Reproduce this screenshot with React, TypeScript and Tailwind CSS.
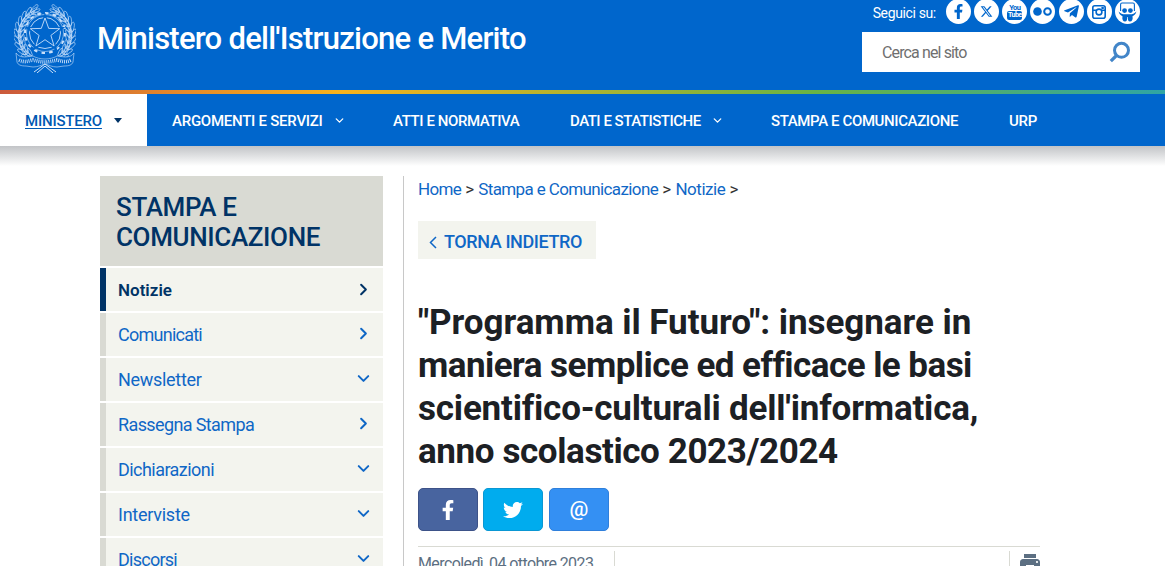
import type { ReactNode } from 'react';
import { FaFacebookF, FaTwitter, FaTelegramPlane } from 'react-icons/fa';
import { FaXTwitter } from 'react-icons/fa6';
import { MdPrint } from 'react-icons/md';
import { ChevronDown, ChevronRight } from 'lucide-react';

const navItems = [
  { label: 'ARGOMENTI E SERVIZI', className: 'w-[221px]', text: 'tracking-[-0.25px]', hasMenu: true },
  { label: 'ATTI E NORMATIVA', className: 'w-[177px]', text: 'tracking-[-0.4px]', hasMenu: false },
  { label: 'DATI E STATISTICHE', className: 'w-[201px]', text: 'tracking-[-0.48px]', hasMenu: true },
  { label: 'STAMPA E COMUNICAZIONE', className: 'w-[238px]', text: 'tracking-[-0.38px]', hasMenu: false },
  { label: 'URP', className: 'w-[79px]', text: 'tracking-[-0.3px]', hasMenu: false },
];

const sideItems = [
  { label: 'Comunicati', text: 'tracking-[-0.75px]', open: false },
  { label: 'Newsletter', text: 'tracking-[-0.3px]', open: true },
  { label: 'Rassegna Stampa', text: 'tracking-[-0.62px]', open: false },
  { label: 'Dichiarazioni', text: 'tracking-[-0.55px]', open: true },
  { label: 'Interviste', text: 'tracking-[-0.25px]', open: true },
  { label: 'Discorsi', text: 'tracking-[-0.75px]', open: true },
];

const leafAngles = [24, 37, 50, 63, 76, 89, 102, 115, 128, 141];

function Branch() {
  return (
    <g>
      <path d="M24 62C11 57 5 46 5 34 5 20 12 9 23 4" />
      {leafAngles.map((angle) => (
        <g key={angle} transform={`rotate(${-angle} 31 32)`}>
          <ellipse cx="32" cy="3.5" rx="5" ry="1.7" transform="rotate(-24 32 3.5)" />
          <ellipse cx="32" cy="6.5" rx="5" ry="1.3" />
          <ellipse cx="32" cy="9" rx="4.5" ry="1.5" transform="rotate(24 32 9)" />
        </g>
      ))}
    </g>
  );
}

function Emblem() {
  return (
    <svg width="62" height="70" viewBox="0 0 62 70" fill="none" stroke="#c9e0fa" strokeWidth="0.6" className="shrink-0">
      <Branch />
      <g transform="translate(62 0) scale(-1 1)"><Branch /></g>
      <circle cx="31" cy="30" r="18.5" fill="#0066cc" />
      <circle cx="31" cy="30" r="20" strokeWidth="2" strokeDasharray="3.6 4.2" />
      <circle cx="31" cy="30" r="15.5" strokeWidth="0.9" />
      <path strokeWidth="3" stroke="#0066cc" d="M31 14l4 11.2 12 .3-9.5 7.3 3.4 11.5L31 37.5l-9.9 6.8 3.4-11.5-9.5-7.3 12-.3Z" />
      <path fill="#0066cc" strokeWidth="0.9" d="M31 15l3.7 10.4 11 .3-8.8 6.7 3.2 10.6L31 36.7 21.9 43l3.2-10.6-8.8-6.7 11-.3Z" />
      <path d="M2 50c2 3 5 4 9 4l8-1c3 2 8 3 12 3s9-1 12-3l8 1c4 0 7-1 9-4l-1 9c-1 3-4 4-9 4l-7 1c-5 0-8-2-12-3-4 1-7 3-12 3l-7-1c-5 0-8-1-9-4Z" fill="#0066cc" />
      <path d="M5 57c6 3 9 1 14 0 4 1 8 2 12 2s8-1 12-2c5 1 8 3 14 0" strokeWidth="3.6" strokeDasharray="0.9 1.1" />
      <path d="M20 69l11-8 11 8M23 70l8-7 8 7" strokeWidth="1" />
    </svg>
  );
}

function SocialIcon({ children }: { children: ReactNode }) {
  return (
    <span className="flex size-[25px] items-center justify-center rounded-full bg-white text-[#0066cc]">{children}</span>
  );
}

function YoutubeIcon() {
  return (
    <span className="flex flex-col items-center font-['Liberation_Sans_Narrow','Roboto',sans-serif] font-bold">
      <span className="text-[7.5px] leading-[7px] tracking-[-0.6px]">You</span>
      <span className="h-[9px] w-[15px] rounded-[2px] bg-[#0066cc] text-center text-[7px] leading-[9px] tracking-[-0.6px] text-white">Tube</span>
    </span>
  );
}

function CameraIcon() {
  return (
    <svg width="14" height="14" viewBox="0 0 14 14" fill="none" stroke="currentColor" strokeWidth="1.6">
      <rect x="0.8" y="0.8" width="12.4" height="12.4" rx="2" />
      <path d="M1 5.2h3.6M9.4 5.2H13" strokeWidth="1.4" />
      <path d="M9.4 2h2.4v2H9.4Z" fill="currentColor" stroke="none" />
      <circle cx="7" cy="7" r="2.9" />
    </svg>
  );
}

function SlideshareIcon() {
  return (
    <svg width="19" height="20" viewBox="0 0 19 20" fill="currentColor">
      <path d="M2.6 9V2.4Q2.6 1 4 1h11q1.4 0 1.4 1.4V9" fill="none" stroke="currentColor" strokeWidth="1.1" />
      <circle cx="6.6" cy="8.6" r="2.4" />
      <circle cx="12.4" cy="8.6" r="2.4" />
      <path d="M0.6 9.6C3 12.4 6 12.6 9.5 12.2c3.500.4 6.500.2 8.900-2.600-.5 2.600-2.200 3.800-3.900 4.600.6 3.200-.4 5.300-2.500 5.300-1.700 0-2.200-1.300-2.200-4.500h-.6c0 3.200-.5 4.500-2.200 4.500-2.100 0-3.100-2.100-2.500-5.300C2.800 13.400 1.100 12.200.6 9.600Z" />
    </svg>
  );
}

function SearchIcon() {
  return (
    <svg width="22" height="22" viewBox="0 0 22 22" fill="none" stroke="#4285c8">
      <circle cx="12.500" cy="9.300" r="7" strokeWidth="3" />
      <path d="M7.500 14.500L1.800 20.200" strokeWidth="3.200" />
    </svg>
  );
}

function Header() {
  return (
    <header>
      <div className="flex h-[90px] justify-between bg-[#0066cc] pl-[14px] pr-[25px]">
        <div className="flex pt-[3px]">
          <Emblem />
          <h1 className="ml-[21px] mt-[15px] whitespace-nowrap text-[31px] font-medium leading-[42px] tracking-[-0.75px] text-white">
            Ministero dell'Istruzione e Merito
          </h1>
        </div>
        <div className="w-[278px]">
          <div className="flex h-8 justify-end gap-[3px]">
            <span className="mr-[7px] whitespace-nowrap pt-[3px] text-sm tracking-[-0.37px] text-white">Seguici su:</span>
            <div className="-mt-px flex gap-[3.2px]">
              <SocialIcon><FaFacebookF size={15} /></SocialIcon>
              <SocialIcon><FaXTwitter size={13} /></SocialIcon>
              <SocialIcon><YoutubeIcon /></SocialIcon>
              <SocialIcon>
                <svg width="19" height="9" viewBox="0 0 19 9">
                  <circle cx="4.5" cy="4.5" r="4.3" fill="currentColor" />
                  <circle cx="14.5" cy="4.5" r="3.3" fill="none" stroke="currentColor" strokeWidth="2" />
                </svg>
              </SocialIcon>
              <SocialIcon><FaTelegramPlane size={17} /></SocialIcon>
              <SocialIcon><CameraIcon /></SocialIcon>
              <SocialIcon><SlideshareIcon /></SocialIcon>
            </div>
          </div>
          <div className="flex h-10 items-center justify-between bg-white pl-5 pr-[9px]">
            <span className="pt-0.5 text-base tracking-[-0.87px] text-[#6f6f6f]">Cerca nel sito</span>
            <SearchIcon />
          </div>
        </div>
      </div>
      <div className="h-1 bg-[linear-gradient(90deg,#cb5a3c_0%,#f9b21b_29%,#69b345_70%,#2fa5a5_100%)]" />
      <nav className="flex h-[52px] bg-[#0066cc] text-[15px] font-medium text-white">
        <a className="flex w-[147px] items-center bg-white pl-[25px] text-[#0059b3]">
          <span className="pt-0.5 tracking-[-0.2px] underline underline-offset-2">MINISTERO</span>
          <svg width="8" height="5" viewBox="0 0 8 5" className="ml-3"><path d="M0 0h8L4 5Z" fill="#003366" /></svg>
        </a>
        {navItems.map((item) => (
          <a key={item.label} className={`flex items-center whitespace-nowrap pl-[25px] ${item.className}`}>
            <span className={`pt-0.5 ${item.text}`}>{item.label}</span>
            {item.hasMenu && <ChevronDown size={13} strokeWidth={2.4} className="ml-2.5" />}
          </a>
        ))}
      </nav>
      <div className="h-5 bg-gradient-to-b from-[#c2c4c7] to-white" />
    </header>
  );
}

function Sidebar() {
  return (
    <aside className="w-[283px] shrink-0">
      <h2 className="h-[90px] bg-[#d9dad3] pl-4 pt-4 text-[26px] font-medium leading-[30px] tracking-[-0.36px] text-[#003366]">
        STAMPA E<br />COMUNICAZIONE
      </h2>
      <ul className="mt-0.5 space-y-0.5 text-lg text-[#0f67c6]">
        <li className="flex h-[43px] items-center justify-between border-l-[6px] border-[#003366] bg-[#f3f4ee] pl-3 pr-2.5 text-[#003366]">
          <span className="pt-px text-[17px] font-semibold">Notizie</span>
          <ChevronRight size={19} strokeWidth={2.5} className="mb-px" />
        </li>
        {sideItems.map((item) => (
          <li key={item.label} className="flex h-[43px] items-center justify-between border-l-[6px] border-[#d9dad3] bg-[#f3f4ee] pl-3 pr-2.5">
            <span className={item.text}>{item.label}</span>
            {item.open
              ? <ChevronDown size={19} strokeWidth={2.5} className="mb-0.5" />
              : <ChevronRight size={19} strokeWidth={2.5} className="mb-0.5" />}
          </li>
        ))}
      </ul>
    </aside>
  );
}

function Article() {
  return (
    <main className="ml-5 w-[637px] border-l border-[#c8c8c8] pl-[14px]">
      <p className="whitespace-nowrap text-[17px] leading-[26px] text-[#333]">
        <a className="tracking-[-0.7px] text-[#0f67c6]">Home</a> &gt; <a className="tracking-[-0.62px] text-[#0f67c6]">Stampa e Comunicazione</a> &gt; <a className="tracking-[-0.45px] text-[#0f67c6]">Notizie</a> &gt;
      </p>
      <a className="mt-[19px] flex h-[38px] w-[178px] items-center bg-[#f3f4ee] pl-[11px] text-[#0f67c6]">
        <svg width="8" height="13" viewBox="0 0 8 13" fill="none" stroke="currentColor" strokeWidth="1.5" className="mt-1">
          <path d="M7 1L1.500 6.500 7 12" />
        </svg>
        <span className="ml-[7px] whitespace-nowrap pt-[3px] text-lg font-medium tracking-[-0.4px]">TORNA INDIETRO</span>
      </a>
      <h1 className="mt-[42px] whitespace-nowrap text-[35px] font-bold leading-[43px] text-[#1c2024]">
        <span className="tracking-[-0.05px]">"Programma il Futuro": insegnare in</span><br />
        <span className="tracking-[-0.55px]">maniera semplice ed efficace le basi</span><br />
        <span className="tracking-[-0.2px]">scientifico-culturali dell'informatica,</span><br />
        <span className="tracking-[-0.4px]">anno scolastico 2023/2024</span>
      </h1>
      <div className="mt-[15px] flex text-white">
        <a className="flex h-[43px] w-[60px] items-center justify-center rounded-[5px] border border-[#3d5288] bg-[#48649f]"><FaFacebookF size={20} /></a>
        <a className="ml-[5px] flex h-[43px] w-[60px] items-center justify-center rounded-[5px] border border-[#0a97d3] bg-[#00acee]"><FaTwitter size={20} /></a>
        <a className="ml-1.5 flex h-[43px] w-[60px] items-center justify-center rounded-[5px] border border-[#2f7fdb] bg-[#3490f3] text-[21px] font-medium">@</a>
      </div>
      <div className="mt-[15px] flex h-10 w-[622px] border-t border-[#d9dad3] pt-1 text-[#5c6f82]">
        <span className="w-[197px] whitespace-nowrap border-r border-[#d9dad3] text-base leading-[25px] tracking-[-0.6px]">Mercoledì, 04 ottobre 2023</span>
        <span className="ml-auto border-l border-[#d9dad3] pl-2"><MdPrint size={24} className="-mr-0.5" /></span>
      </div>
    </main>
  );
}

export default function App() {
  return (
    <div className="h-[566px] w-[1165px] overflow-hidden bg-white font-['Roboto',sans-serif]">
      <Header />
      <div className="flex pl-[100px] pt-[10px]">
        <Sidebar />
        <Article />
      </div>
    </div>
  );
}
